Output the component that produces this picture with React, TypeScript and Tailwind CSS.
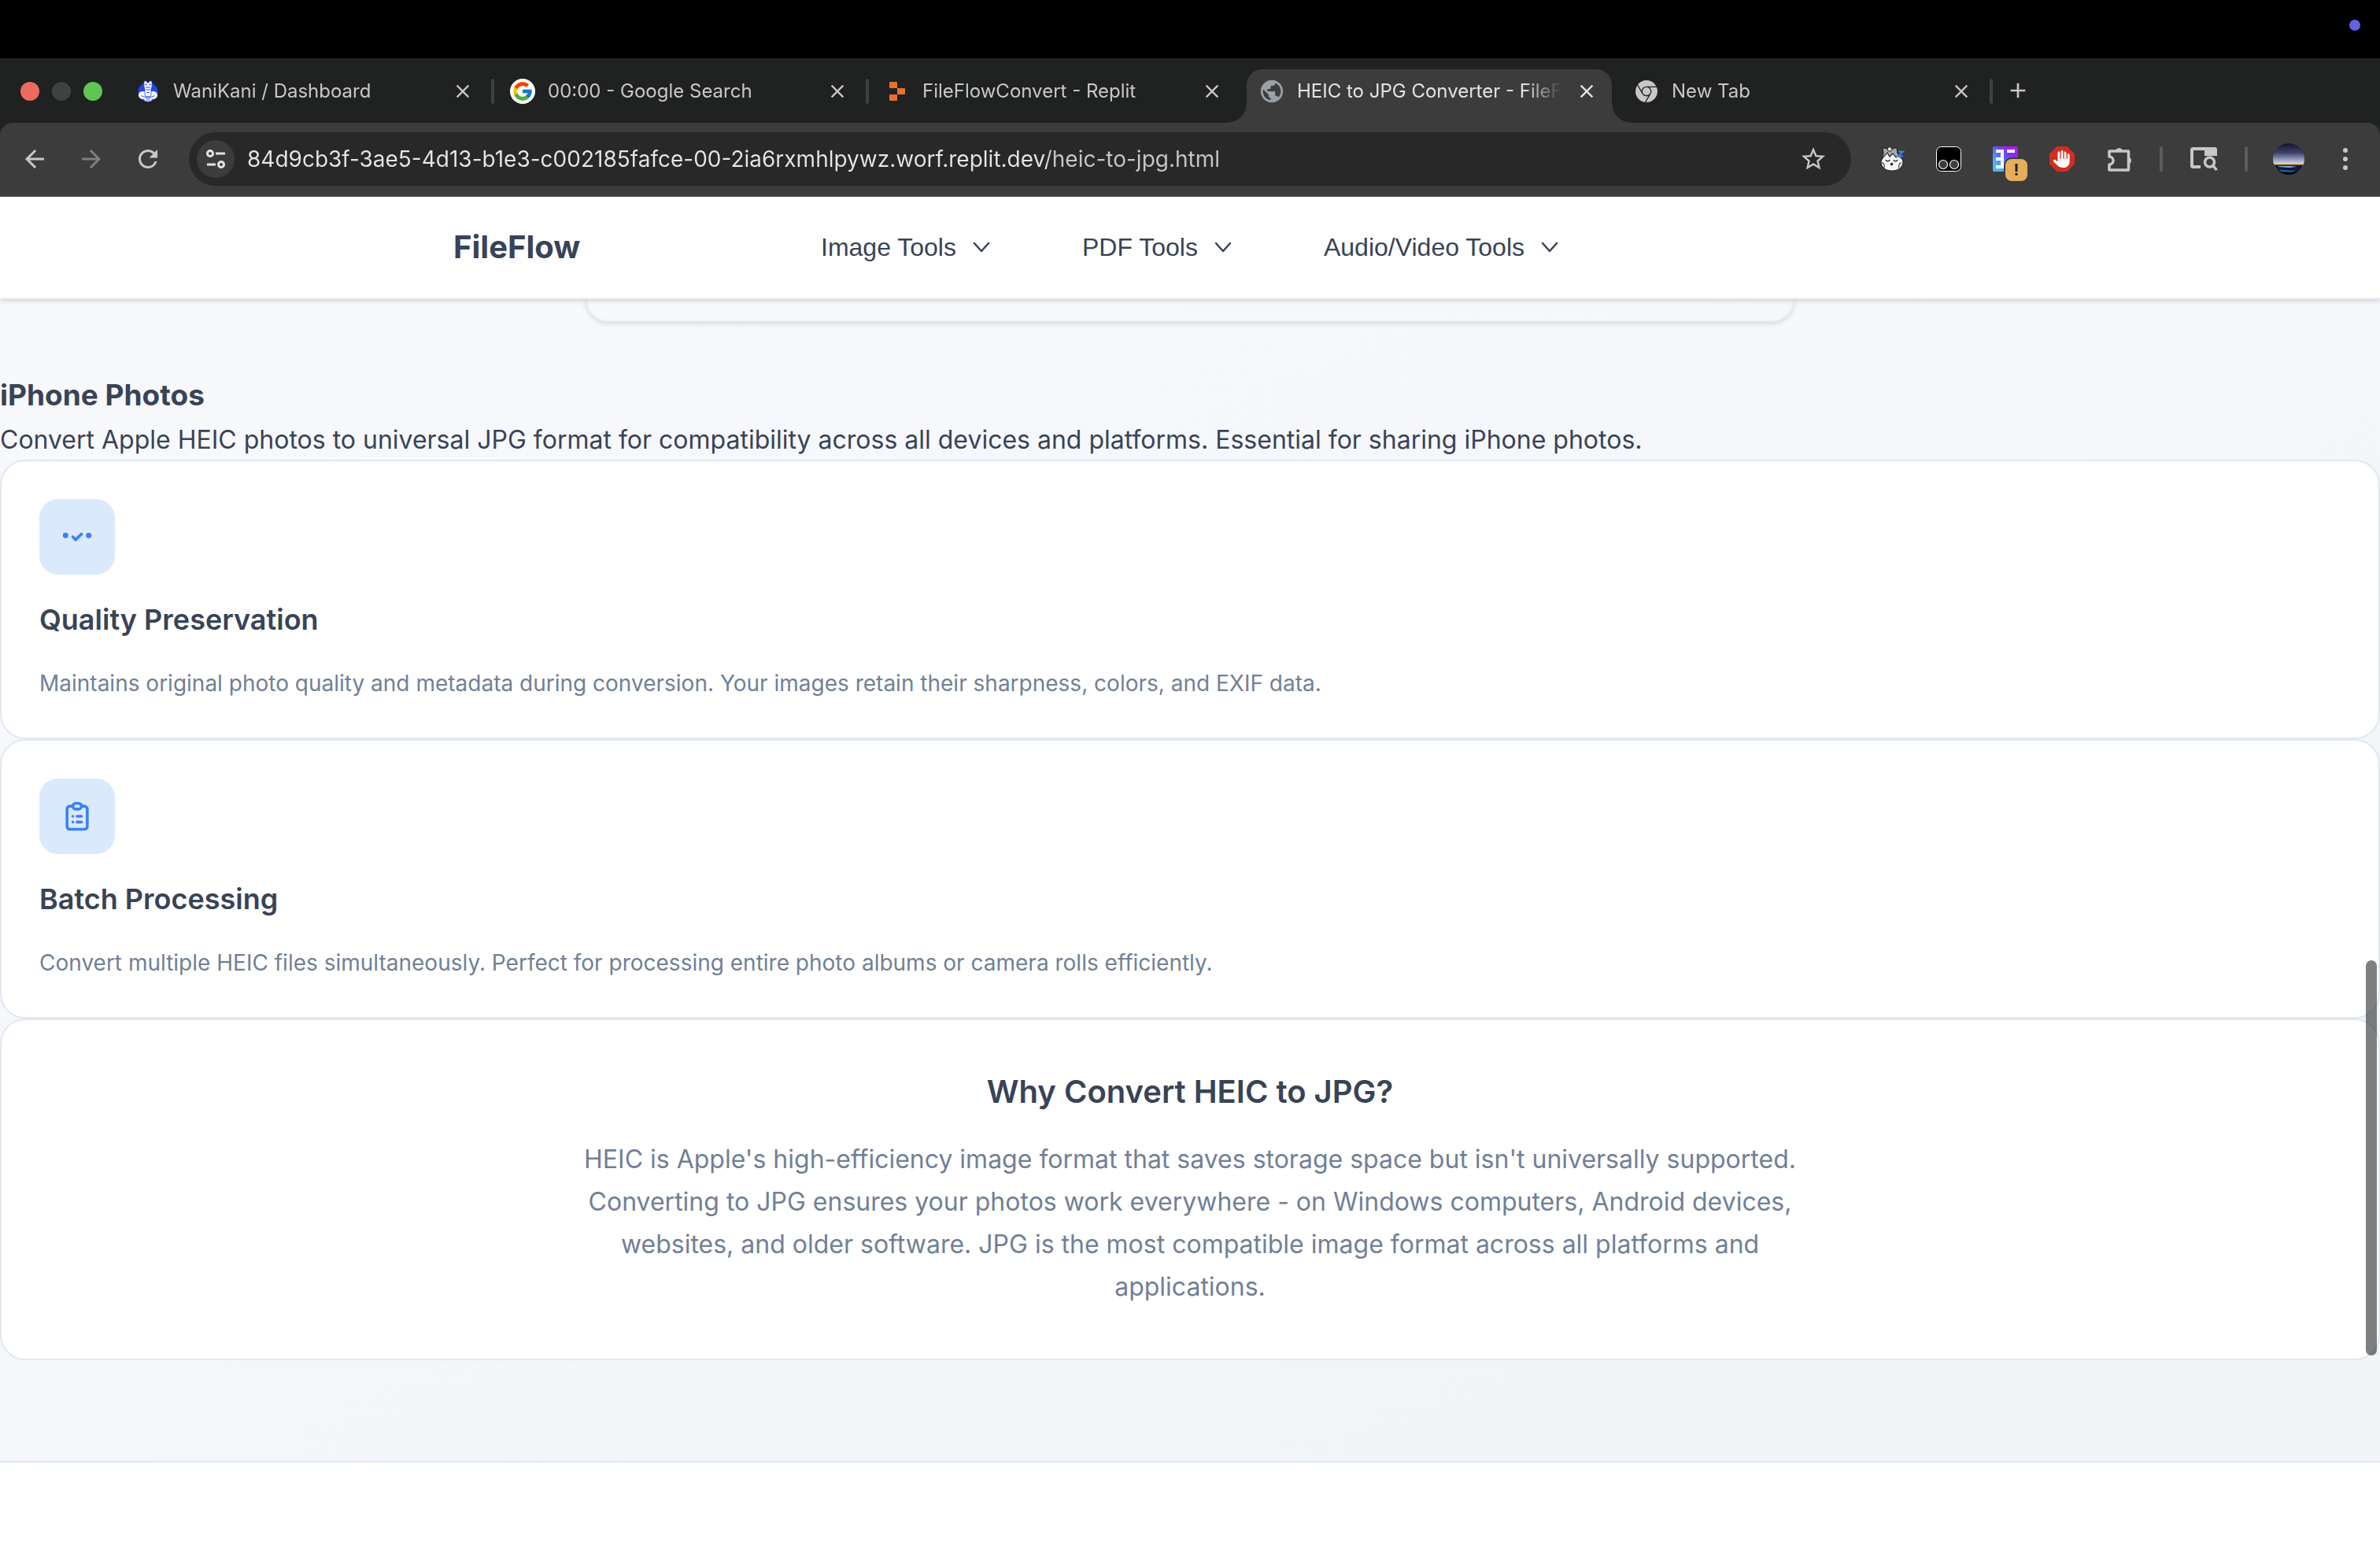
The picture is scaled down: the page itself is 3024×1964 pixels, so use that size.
import type { ReactNode } from "react";
import { FcGoogle } from "react-icons/fc";
import { FaHand } from "react-icons/fa6";
import { SiGooglechrome } from "react-icons/si";
import {
  MdAdd,
  MdArrowBack,
  MdArrowForward,
  MdClose,
  MdPublic,
  MdRefresh,
  MdStarBorder,
} from "react-icons/md";

function CrocodileIcon() {
  return (
    <svg viewBox="0 0 26 28" className="h-7 w-[26px]" aria-hidden="true">
      <circle cx="13" cy="15" r="12.500" fill="#2546e8" />
      <ellipse cx="6.500" cy="19" rx="5.500" ry="5" fill="#fff" />
      <ellipse cx="19.500" cy="19" rx="5.500" ry="5" fill="#fff" />
      <path d="M8 1h3l1 2h2l1-2h3v7l-1 3v8l-4 3-4-3v-8L8 8z" fill="#fff" stroke="#2546e8" strokeWidth="0.800" />
      <path d="M7 22l4-1h4l4 1-2 4-4 1-4-1z" fill="#fff" />
      <path d="M10 9h6M10.500 12h5M11 16.500c1-1.500 3-1.500 4 0M4.500 19c2 2.500 5 2.500 8.500 1.500 3.500 1 6.500 1 8.500-1.500M10 22.500h6M10.500 25h5" fill="none" stroke="#2546e8" strokeWidth="1" />
      <circle cx="10.500" cy="5.500" r="1" fill="#2546e8" />
      <circle cx="15.500" cy="5.500" r="1" fill="#2546e8" />
    </svg>
  );
}

function ReplitIcon() {
  return (
    <svg viewBox="0 0 20 24" className="h-6 w-5" aria-hidden="true">
      <path d="M1 0h8q1 0 1 1v7H1q-1 0-1-1V1q0-1 1-1zM10 8h9q1 0 1 1v6q0 1-1 1h-9zM1 16h9v7q0 1-1 1H1q-1 0-1-1v-6q0-1 1-1z" fill="#e8702e" />
    </svg>
  );
}

function TuneIcon() {
  return (
    <svg viewBox="0 0 26 24" className="h-6 w-[26px]" fill="none" stroke="#e3e3e3" strokeWidth="3" aria-hidden="true">
      <circle cx="6" cy="5" r="3.500" />
      <path d="M13 5h12M2 19h11" />
      <circle cx="20" cy="19" r="3.500" />
    </svg>
  );
}

function SleepyPetIcon() {
  return (
    <svg viewBox="0 0 32 32" className="size-8" aria-hidden="true">
      <path d="M4 1.500l7 2h4l7-2 1 7 5 8-9 6-12-3-4-4 2-7z" fill="#a8a8a8" stroke="#222" strokeWidth="1.200" />
      <path d="M2 20c0-5 4-7 8-12l3 5 4-4 4 5 3-2c4 3 6 4 6 8 0 7-6 11-14 11S2 27 2 20z" fill="#f5f5f5" stroke="#222" strokeWidth="1.200" />
      <circle cx="13" cy="3.500" r="2.800" fill="#ddd" stroke="#222" strokeWidth="1" />
      <path d="M8 17c1 2.500 4 2.500 5 0M18 17c1 2.500 4 2.500 5 0" fill="none" stroke="#222" strokeWidth="1.300" />
      <circle cx="15.500" cy="22.500" r="1.800" fill="#222" />
      <path d="M3 21c3 0 4 3 3 7M28 21c-3 0-4 3-3 7" fill="none" stroke="#555" strokeWidth="1.300" />
      <path d="M24 6.500h6l-6 6h6" fill="none" stroke="#3b82f6" strokeWidth="2.200" />
    </svg>
  );
}

function MaskIcon() {
  return (
    <svg viewBox="0 0 32 32" className="size-8" aria-hidden="true">
      <rect x="0.500" y="0.500" width="31" height="31" rx="6" fill="#000" stroke="#fff" />
      <circle cx="9" cy="23" r="5.500" fill="#3c3c3c" stroke="#fff" strokeWidth="1.200" />
      <circle cx="23" cy="23" r="5.500" fill="#3c3c3c" stroke="#fff" strokeWidth="1.200" />
    </svg>
  );
}

function FormIcon() {
  return (
    <svg viewBox="0 0 32 32" className="size-8" aria-hidden="true">
      <defs>
        <linearGradient id="form-fill" x1="0" y1="1" x2="1" y2="0">
          <stop offset="0.200" stopColor="#4db5ff" />
          <stop offset="0.550" stopColor="#5a55f5" />
          <stop offset="0.750" stopColor="#a020f0" />
        </linearGradient>
      </defs>
      <rect width="32" height="32" rx="2" fill="url(#form-fill)" />
      <path d="M4 4h10v24H4v-4h6v-6H4v-4h6V8H4zM18 4h10v4H18z" fill="#fff" />
    </svg>
  );
}

function PuzzleIcon() {
  return (
    <svg viewBox="0 0 36 36" className="size-9" fill="none" stroke="#c7c7c7" strokeWidth="3.500" strokeLinejoin="round" aria-hidden="true">
      <path d="M4 8h24.500v24H4v-7a5 5 0 0 0 0-10z" />
      <path d="M13 7a4 4 0 0 1 7 0zM29 16.500a4 4 0 0 1 0 7z" fill="#c7c7c7" strokeWidth="2" />
    </svg>
  );
}

function SidePanelIcon() {
  return (
    <svg viewBox="0 0 36 30" className="h-[30px] w-9" fill="none" stroke="#c7c7c7" strokeWidth="4" aria-hidden="true">
      <path d="M14 25H4.500q-1.500 0-1.500-1.500v-20Q3 2 4.500 2H20" />
      <path d="M19 0h13q3 0 3 3v8H19z" fill="#c7c7c7" stroke="none" />
      <circle cx="25.500" cy="19" r="6" strokeWidth="3.500" />
      <path d="M29.500 23l5 6" strokeWidth="3.500" />
    </svg>
  );
}

function Avatar() {
  return (
    <svg viewBox="0 0 40 40" className="size-10 rounded-full" aria-hidden="true">
      <defs>
        <linearGradient id="avatar-sky" x1="0" y1="0" x2="0" y2="1">
          <stop offset="0" stopColor="#14152a" />
          <stop offset="0.300" stopColor="#3f4068" />
          <stop offset="0.600" stopColor="#b9bfe0" />
          <stop offset="0.650" stopColor="#e8dcc8" />
        </linearGradient>
      </defs>
      <rect width="40" height="40" fill="url(#avatar-sky)" />
      <rect y="26" width="40" height="14" fill="#0c1a38" />
      <path d="M0 26h40v1.500H0z" fill="#e2a45a" />
      <path d="M6 29h18l6 1-10 1-12-1z" fill="#8fb3cf" />
      <path d="M8 34c8-1 14 2 22 0l-6 3-14-1z" fill="#2d5f94" />
      <path d="M0 33l14 4 26-1v4H0z" fill="#05080f" />
    </svg>
  );
}

function DotsIcon() {
  return (
    <svg viewBox="0 0 6 28" className="h-7 w-1.5" fill="#c7c7c7" aria-hidden="true">
      <circle cx="3" cy="3" r="3" />
      <circle cx="3" cy="14" r="3" />
      <circle cx="3" cy="25" r="3" />
    </svg>
  );
}

function ChevronIcon() {
  return (
    <svg viewBox="0 0 24 14" className="h-3.5 w-6" fill="none" stroke="#394356" strokeWidth="2.500" strokeLinecap="round" strokeLinejoin="round" aria-hidden="true">
      <path d="M3 2l9 10 9-10" />
    </svg>
  );
}

function QualityIcon() {
  return (
    <svg viewBox="0 0 24 24" className="size-11" fill="none" stroke="#3b82f6" strokeWidth="2" strokeLinecap="round" strokeLinejoin="round" aria-hidden="true">
      <path d="M9 12l2 2 4-4" />
      <circle cx="4" cy="11" r="1.900" fill="#3b82f6" stroke="none" />
      <circle cx="20" cy="11" r="1.900" fill="#3b82f6" stroke="none" />
    </svg>
  );
}

function ClipboardIcon() {
  return (
    <svg viewBox="0 0 24 24" className="size-11" fill="none" stroke="#3b82f6" strokeWidth="2" strokeLinecap="round" strokeLinejoin="round" aria-hidden="true">
      <path d="M9 5H7a2 2 0 00-2 2v12a2 2 0 002 2h10a2 2 0 002-2V7a2 2 0 00-2-2h-2M9 5a2 2 0 002 2h2a2 2 0 002-2M9 5a2 2 0 012-2h2a2 2 0 012 2m-3 7h3m-3 4h3m-6-4h.01M9 16h.01" />
    </svg>
  );
}

type TabProps = { icon: ReactNode; title: string; active?: boolean; divider?: boolean };

function BrowserTab({ icon, title, active, divider }: TabProps) {
  return (
    <div className="relative flex h-full w-[476px] shrink items-center px-[22px] pt-0.5">
      {active && (
        <div className="absolute inset-x-1.5 top-3.5 bottom-0 rounded-t-[20px] bg-[#3c3c3c]">
          <span className="absolute bottom-0 -left-6 size-6 bg-[radial-gradient(circle_at_0_0,transparent_23px,#3c3c3c_24px)]" />
          <span className="absolute -right-6 bottom-0 size-6 bg-[radial-gradient(circle_at_100%_0,transparent_23px,#3c3c3c_24px)]" />
        </div>
      )}
      <button
        type="button"
        role="tab"
        aria-selected={!!active}
        className={
          active
            ? "relative flex min-w-0 flex-1 items-center gap-4 text-left text-[#e3e3e3]"
            : "relative flex min-w-0 flex-1 items-center gap-4 text-left text-[#c7c7c7]"
        }
      >
        <span className="flex size-8 shrink-0 items-center justify-center">{icon}</span>
        <span className="min-w-0 flex-1 overflow-hidden text-[24px] leading-8 whitespace-nowrap mask-r-from-[calc(100%-48px)] mask-r-to-100%">
          {title}
        </span>
      </button>
      <button
        type="button"
        aria-label={`Close ${title}`}
        className={
          active
            ? "relative ml-4 flex size-8 items-center justify-center text-[#e3e3e3]"
            : "relative ml-4 flex size-8 items-center justify-center text-[#c7c7c7]"
        }
      >
        <MdClose className="size-7" />
      </button>
      {divider && <span className="absolute top-[26px] -right-0.5 h-8 w-1 rounded-full bg-[#3f4140]" />}
    </div>
  );
}

function TabStrip() {
  return (
    <div className="flex h-[82px] bg-[#202221]">
      <div className="flex w-[150px] shrink-0 items-center gap-4 pt-0.5 pl-[26px]">
        <button type="button" aria-label="Close window" className="size-6 rounded-full bg-[#ee6a5f]" />
        <button type="button" aria-label="Minimize window" className="size-6 rounded-full bg-[#404241]" />
        <button type="button" aria-label="Zoom window" className="size-6 rounded-full bg-[#61c554]" />
      </div>
      <div role="tablist" className="flex h-full">
        <BrowserTab icon={<CrocodileIcon />} title="WaniKani / Dashboard" divider />
        <BrowserTab
          icon={
            <span className="flex size-8 items-center justify-center rounded-full bg-white">
              <FcGoogle className="size-[28px]" />
            </span>
          }
          title="00:00 - Google Search"
          divider
        />
        <BrowserTab icon={<ReplitIcon />} title="FileFlowConvert - Replit" />
        <BrowserTab icon={<MdPublic className="size-[34px] shrink-0 text-[#9aa0a6]" />} title="HEIC to JPG Converter - FileFlow" active />
        <BrowserTab icon={<SiGooglechrome className="size-7" />} title="New Tab" divider />
      </div>
      <button type="button" aria-label="New tab" className="ml-[18px] flex w-8 items-center justify-center text-[#c7c7c7]">
        <MdAdd className="size-8 shrink-0" />
      </button>
    </div>
  );
}

function Toolbar() {
  return (
    <div className="bg-[#202221]">
      <div className="flex h-[94px] items-center rounded-t-[16px] border-b-2 border-[#4a4848] bg-[#3c3c3c] pr-[26px] pl-[26px]">
        <div className="flex shrink-0 gap-9">
          <button type="button" aria-label="Back" className="text-[#c7c7c7]">
            <MdArrowBack className="size-9" />
          </button>
          <button type="button" aria-label="Forward" className="text-[#7f7f7f]">
            <MdArrowForward className="size-9" />
          </button>
          <button type="button" aria-label="Reload" className="text-[#c7c7c7]">
            <MdRefresh className="size-9" />
          </button>
        </div>
        <div className="ml-[34px] flex h-[68px] flex-1 items-center rounded-full bg-[#282828] pr-[30px] pl-2.5">
          <button type="button" aria-label="View site information" className="flex size-12 shrink-0 items-center justify-center rounded-full bg-[#3c3c3c]">
            <TuneIcon />
          </button>
          <input
            type="text"
            aria-label="Address"
            readOnly
            value="84d9cb3f-3ae5-4d13-b1e3-c002185fafce-00-2ia6rxmhlpywz.worf.replit.dev/heic-to-jpg.html"
            className="ml-4 min-w-0 flex-1 bg-[linear-gradient(90deg,#e6e6e6_1016px,#c7c7c7_1016px)] bg-clip-text text-[28px] leading-10 text-transparent outline-none"
          />
          <button type="button" aria-label="Bookmark this page" className="text-[#c7c7c7]">
            <MdStarBorder className="size-9" />
          </button>
        </div>
        <div className="ml-9 flex shrink-0 items-center gap-10">
          <button type="button" aria-label="Sleeping pet extension"><SleepyPetIcon /></button>
          <button type="button" aria-label="Mask extension"><MaskIcon /></button>
          <button type="button" aria-label="Form extension" className="relative">
            <FormIcon />
            <span className="absolute top-3.5 left-3.5 flex size-8 items-center justify-center rounded-[10px] border-2 border-[#3c3c3c] bg-[#e5ae5e] text-[20px] leading-5 font-bold text-[#222]">
              !
            </span>
          </button>
          <button type="button" aria-label="Ad blocker" className="flex size-8 items-center justify-center bg-[#d32d20] text-white [clip-path:polygon(30%_0,70%_0,100%_30%,100%_70%,70%_100%,30%_100%,0_70%,0_30%)]">
            <FaHand className="size-[22px]" />
          </button>
          <button type="button" aria-label="Extensions"><PuzzleIcon /></button>
        </div>
        <span className="ml-8 h-8 w-1 rounded-full bg-[#5c5c5c]" />
        <button type="button" aria-label="Side panel" className="ml-[34px]"><SidePanelIcon /></button>
        <span className="ml-[34px] h-8 w-1 rounded-full bg-[#5c5c5c]" />
        <button type="button" aria-label="Profile" className="ml-8"><Avatar /></button>
        <button type="button" aria-label="Menu" className="ml-[49px] pr-[15px]"><DotsIcon /></button>
      </div>
    </div>
  );
}

function SiteHeader() {
  return (
    <header className="relative z-10 border-b-2 border-[#eff1f4] bg-[#fefefe] shadow-[0_2px_6px_rgba(0,0,0,0.16)]">
      <div className="mx-auto grid h-[128px] max-w-[1872px] grid-cols-[1fr_auto_1fr] items-center">
        <a href="#home" className="text-[40px] leading-[64px] font-bold text-[#394356]">FileFlow</a>
        <nav className="flex gap-[116px] font-['Liberation_Sans',Arial,sans-serif]">
          {["Image Tools", "PDF Tools", "Audio/Video Tools"].map((label) => (
            <button key={label} type="button" className="flex items-center gap-5 text-[32px] leading-[52px] text-[#394356]">
              {label}
              <ChevronIcon />
            </button>
          ))}
        </nav>
      </div>
    </header>
  );
}

function FeatureCard({ icon, title, text }: { icon: ReactNode; title: string; text: string }) {
  return (
    <article className="rounded-[32px] border-2 border-[#e2e8f0] bg-white p-12">
      <div className="flex size-24 items-center justify-center rounded-[24px] bg-[#dbe9fc]">{icon}</div>
      <h3 className="mt-7 text-[36px] leading-[58px] font-semibold text-[#394356]">{title}</h3>
      <p className="mt-8 text-[28px] leading-[41px] text-[#718096]">{text}</p>
    </article>
  );
}

export default function App() {
  return (
    <div className="relative min-h-screen overflow-hidden bg-white font-[Inter,sans-serif]">
      <div className="flex h-[74px] items-start justify-end bg-black pt-[25px] pr-[25px]">
        <span className="size-3.5 rounded-full bg-[#6461e8]" />
      </div>
      <TabStrip />
      <Toolbar />
      <SiteHeader />
      <main className="border-b-2 border-[#e2e8f0] bg-linear-to-br from-[#f8f9fb] via-[#f5f7fb] via-40% to-[#f1f5f8] to-80% pb-[128px]">
        <div className="mx-auto h-[29px] max-w-[1536px] rounded-b-[48px] border-2 border-t-0 border-[#eceef1] shadow-[0_2px_6px_rgba(0,0,0,0.14)]" />
        <h2 className="mt-16 mb-0.5 text-[37px] leading-[58px] font-bold text-[#394356]">iPhone Photos</h2>
        <p className="text-[32px] leading-[51px] text-[#394356]">
          Convert Apple HEIC photos to universal JPG format for compatibility across all devices and platforms. Essential for sharing iPhone photos.
        </p>
        <FeatureCard
          icon={<QualityIcon />}
          title="Quality Preservation"
          text="Maintains original photo quality and metadata during conversion. Your images retain their sharpness, colors, and EXIF data."
        />
        <FeatureCard
          icon={<ClipboardIcon />}
          title="Batch Processing"
          text="Convert multiple HEIC files simultaneously. Perfect for processing entire photo albums or camera rolls efficiently."
        />
        <section className="rounded-[32px] border-2 border-[#e2e8f0] bg-white px-12 pt-14 pb-16 text-center">
          <h2 className="text-[40px] leading-[70px] font-semibold text-[#394356]">Why Convert HEIC to JPG?</h2>
          <p className="mx-auto mt-6 max-w-[1600px] text-[32px] leading-[54px] text-[#718096]">
            HEIC is Apple's high-efficiency image format that saves storage space but isn't universally supported. Converting to JPG ensures your photos work everywhere - on Windows computers, Android devices, websites, and older software. JPG is the most compatible image format across all platforms and applications.
          </p>
        </section>
      </main>
      <div className="absolute top-[1220px] right-1 z-20 h-[502px] w-3.5 rounded-full bg-black/50" />
    </div>
  );
}
